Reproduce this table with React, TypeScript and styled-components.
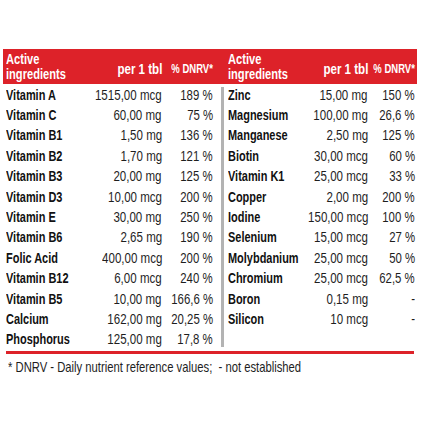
import React from 'react'
import styled, { createGlobalStyle } from 'styled-components'

const GlobalStyle = createGlobalStyle`
  html, body {
    margin: 0;
    padding: 0;
    background: #ffffff;
  }
  body {
    font-family: 'Liberation Sans', Arial, sans-serif;
    color: #1a1a1a;
  }
`

const RED = '#dd2229'

// the print uses a tall condensed face, so regular glyphs get squeezed horizontally
const Squeeze = styled.span<{ $x: number; $end?: boolean }>`
  display: inline-block;
  flex: none;
  white-space: nowrap;
  transform: scaleX(${p => p.$x});
  transform-origin: ${p => (p.$end ? 'right' : 'left')} center;
`

const Sheet = styled.div`
  width: 414px;
  padding: 49px 5px 0 3px;
`

const HeaderBand = styled.div`
  display: flex;
  height: 35px;
  background: ${RED};
  color: #ffffff;
`

const Half = styled.div<{ side: 'left' | 'right' }>`
  display: grid;
  grid-template-columns: ${p => (p.side === 'left' ? '88px 68px 51px' : '72px 68px 47px')};
  padding: ${p => (p.side === 'left' ? '0 8px 0 3px' : '0 2px 0 4px')};
  width: ${p => (p.side === 'left' ? '218px' : '193px')};
  box-sizing: border-box;
`

const HeadTitle = styled.div`
  font-weight: 700;
  font-size: 15px;
  line-height: 15px;
  padding-top: 2px;
  display: flex;
  flex-direction: column;
`

const HeadCell = styled.div<{ $size: number }>`
  display: flex;
  justify-content: flex-end;
  align-items: center;
  font-weight: 700;
  font-size: ${p => p.$size}px;
  padding-top: 4px;
`

const Gap = styled.div`
  width: 3px;
`

const Body = styled.div`
  display: flex;
  height: 265px;
`

const Divider = styled.div`
  width: 3px;
  margin: 3px 0 2px;
  background: #b3b3b3;
`

const Column = styled(Half)`
  grid-auto-rows: 20.4px;
  align-content: start;
`

const Cell = styled.div<{ $end?: boolean; $bold?: boolean }>`
  display: flex;
  align-items: center;
  justify-content: ${p => (p.$end ? 'flex-end' : 'flex-start')};
  font-size: 15px;
  font-weight: ${p => (p.$bold ? 700 : 400)};
  color: ${p => (p.$bold ? '#111111' : '#1e1e1e')};
  min-width: 0;
`

const Rule = styled.div`
  height: 3px;
  margin: 2px 0 0 3px;
  width: 408px;
  background: ${RED};
`

const Note = styled.div`
  font-size: 15px;
  color: #1e1e1e;
  padding: 4px 0 0 5px;
`

type Row = [string, string, string]

const left: Row[] = [
  ['Vitamin A', '1515,00 mcg', '189 %'],
  ['Vitamin C', '60,00 mg', '75 %'],
  ['Vitamin B1', '1,50 mg', '136 %'],
  ['Vitamin B2', '1,70 mg', '121 %'],
  ['Vitamin B3', '20,00 mg', '125 %'],
  ['Vitamin D3', '10,00 mcg', '200 %'],
  ['Vitamin E', '30,00 mg', '250 %'],
  ['Vitamin B6', '2,65 mg', '190 %'],
  ['Folic Acid', '400,00 mcg', '200 %'],
  ['Vitamin B12', '6,00 mcg', '240 %'],
  ['Vitamin B5', '10,00 mg', '166,6 %'],
  ['Calcium', '162,00 mg', '20,25 %'],
  ['Phosphorus', '125,00 mg', '17,8 %'],
]

const right: Row[] = [
  ['Zinc', '15,00 mg', '150 %'],
  ['Magnesium', '100,00 mg', '26,6 %'],
  ['Manganese', '2,50 mg', '125 %'],
  ['Biotin', '30,00 mcg', '60 %'],
  ['Vitamin K1', '25,00 mcg', '33 %'],
  ['Copper', '2,00 mg', '200 %'],
  ['Iodine', '150,00 mcg', '100 %'],
  ['Selenium', '15,00 mcg', '27 %'],
  ['Molybdanium', '25,00 mcg', '50 %'],
  ['Chromium', '25,00 mcg', '62,5 %'],
  ['Boron', '0,15 mg', '-'],
  ['Silicon', '10 mcg', '-'],
]

function Header({ side }: { side: 'left' | 'right' }) {
  return (
    <Half side={side}>
      <HeadTitle>
        <Squeeze $x={0.74}>Active</Squeeze>
        <Squeeze $x={0.74}>ingredients</Squeeze>
      </HeadTitle>
      <HeadCell $size={15}>
        <Squeeze $x={0.77} $end>per 1 tbl</Squeeze>
      </HeadCell>
      <HeadCell $size={13}>
        <Squeeze $x={0.73} $end>% DNRV*</Squeeze>
      </HeadCell>
    </Half>
  )
}

function Rows({ side, rows }: { side: 'left' | 'right'; rows: Row[] }) {
  return (
    <Column side={side}>
      {rows.map(([name, amount, pct]) => (
        <React.Fragment key={name}>
          <Cell $bold>
            <Squeeze $x={0.73}>{name}</Squeeze>
          </Cell>
          <Cell $end>
            <Squeeze $x={0.77} $end>{amount}</Squeeze>
          </Cell>
          <Cell $end>
            <Squeeze $x={0.76} $end>{pct}</Squeeze>
          </Cell>
        </React.Fragment>
      ))}
    </Column>
  )
}

export default function App() {
  return (
    <>
      <GlobalStyle />
      <Sheet>
        <HeaderBand>
          <Header side="left" />
          <Gap />
          <Header side="right" />
        </HeaderBand>
        <Body>
          <Rows side="left" rows={left} />
          <Divider />
          <Rows side="right" rows={right} />
        </Body>
        <Rule />
        <Note>
          <Squeeze $x={0.75}>* DNRV - Daily nutrient reference values;&nbsp; - not established</Squeeze>
        </Note>
      </Sheet>
    </>
  )
}
